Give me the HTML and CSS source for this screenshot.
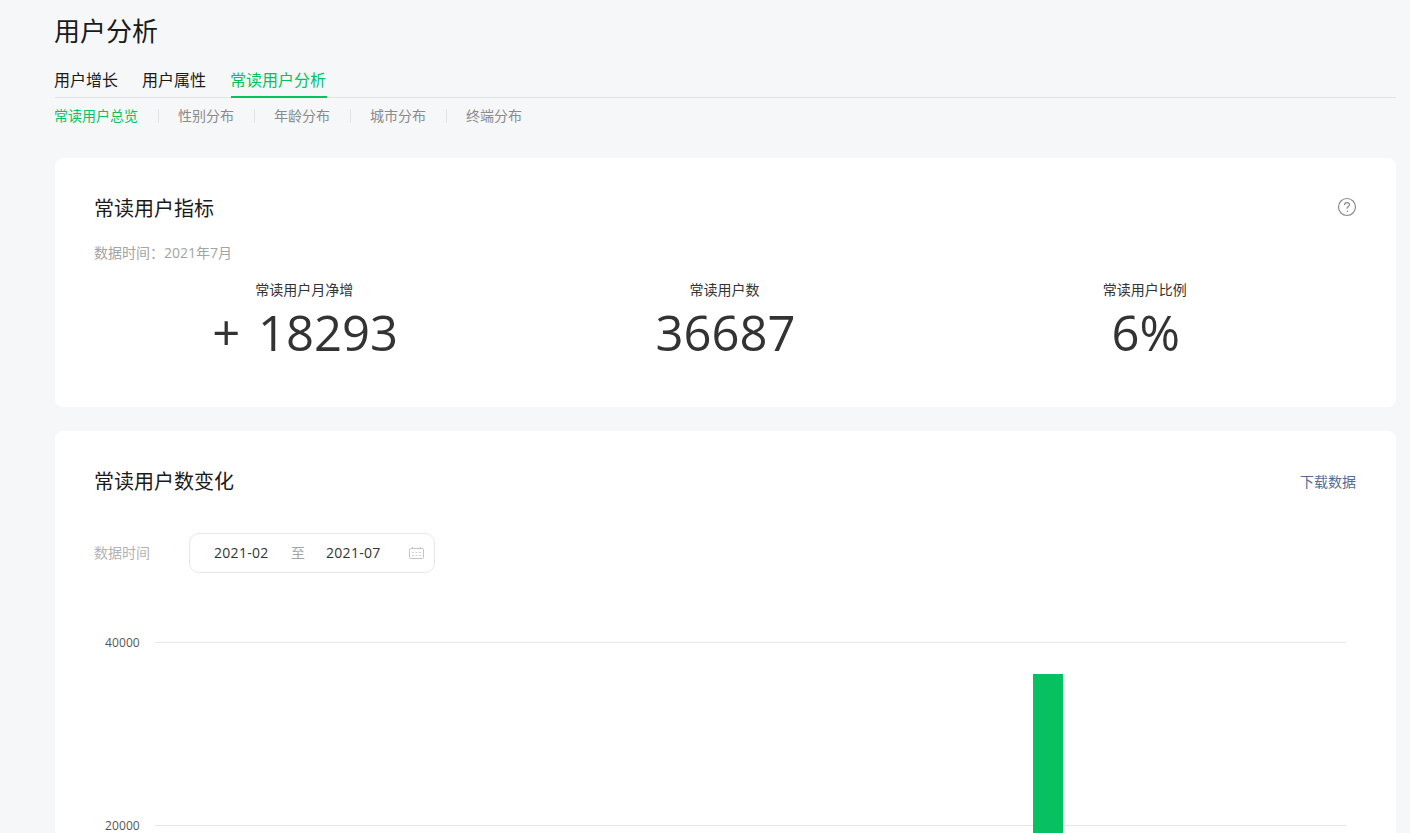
FILE: index.html
```html
<!DOCTYPE html>
<html lang="zh-CN">
<head>
<meta charset="utf-8">
<title>用户分析</title>
<link rel="stylesheet" href="styles.css">
</head>
<body>
<main class="page">
  <h1 class="page-title">用户分析</h1>
  <nav class="tabs">
    <a class="tab">用户增长</a>
    <a class="tab">用户属性</a>
    <a class="tab tab-active">常读用户分析</a>
  </nav>
  <nav class="subnav">
    <a class="sub sub-active">常读用户总览</a>
    <a class="sub">性别分布</a>
    <a class="sub">年龄分布</a>
    <a class="sub">城市分布</a>
    <a class="sub">终端分布</a>
  </nav>

  <section class="card card-metrics">
    <header class="card-head">
      <h2 class="card-title">常读用户指标</h2>
      <svg class="help" width="20" height="20" viewBox="0 0 20 20" fill="none">
        <circle cx="10" cy="10" r="8.5" stroke="#8a8a8a" stroke-width="1.2"/>
        <path d="M7.5 8c0-1.500 1.100-2.400 2.500-2.400s2.500.9 2.500 2.200c0 1-.6 1.500-1.300 2-.7.5-1.200.9-1.200 1.900" stroke="#8a8a8a" stroke-width="1.2"/>
        <circle cx="10.500" cy="14.200" r=".8" fill="#8a8a8a"/>
      </svg>
    </header>
    <p class="data-time">数据时间：2021年7月</p>
    <div class="metrics">
      <div class="metric">
        <div class="metric-label">常读用户月净增</div>
        <div class="metric-value">+ 18293</div>
      </div>
      <div class="metric">
        <div class="metric-label">常读用户数</div>
        <div class="metric-value">36687</div>
      </div>
      <div class="metric">
        <div class="metric-label">常读用户比例</div>
        <div class="metric-value">6%</div>
      </div>
    </div>
  </section>

  <section class="card card-chart">
    <header class="card-head">
      <h2 class="card-title">常读用户数变化</h2>
      <a class="download">下载数据</a>
    </header>
    <div class="filter">
      <span class="filter-label">数据时间</span>
      <div class="range">
        <span class="range-date">2021-02</span>
        <span class="range-sep">至</span>
        <span class="range-date">2021-07</span>
        <svg class="calendar" width="15" height="12" viewBox="0 0 15 12" fill="none">
          <rect x=".5" y="1.500" width="14" height="10" rx="1" stroke="#c4c4c4"/>
          <path d="M3.500 0v2M11.500 0v2" stroke="#c4c4c4"/>
          <path d="M3 5h2v1H3zM6.500 5h2v1h-2zM10 5h2v1h-2zM3 8h2v1H3zM6.500 8h2v1h-2zM10 8h2v1h-2z" fill="#cfcfcf"/>
        </svg>
      </div>
    </div>
    <div class="chart">
      <div class="gridline"><span class="tick">40000</span></div>
      <div class="gridline"><span class="tick">20000</span></div>
      <div class="bars">
        <div class="bar-slot"></div>
        <div class="bar-slot"></div>
        <div class="bar-slot"></div>
        <div class="bar-slot"></div>
        <div class="bar-slot"><div class="bar" style="height:334px"></div></div>
        <div class="bar-slot"></div>
      </div>
    </div>
  </section>
</main>
</body>
</html>
```
FILE: styles.css
```css
* { box-sizing: border-box; }
html, body { margin: 0; height: 833px; overflow: hidden; }
body {
  background: #f6f7f9;
  color: #1a1a1a;
  font-family: "Open Sans", "Noto Sans CJK SC", sans-serif;
}
.page { padding: 0 14px 0 55px; }

.page-title {
  margin: 0;
  padding-top: 13px;
  height: 68px;
  font-size: 26px;
  line-height: 36px;
  font-weight: 400;
  text-indent: -1px;
}

.tabs {
  display: flex;
  gap: 24px;
  height: 30px;
  border-bottom: 1px solid #e2e3e5;
}
.tab {
  height: 30px;
  padding-right: 1px;
  font-size: 16px;
  line-height: 24px;
  color: #1a1a1a;
  text-indent: -1px;
}
.tab-active {
  color: #07c160;
  border-bottom: 2px solid #07c160;
}

.subnav {
  display: flex;
  align-items: center;
  height: 36px;
  margin-bottom: 24px;
}
.sub {
  font-size: 14px;
  line-height: 20px;
  color: #8a8a8a;
  padding-right: 21px;
  margin-right: 20px;
  position: relative;
  text-indent: -1px;
}
.sub:not(:last-child)::after {
  content: "";
  position: absolute;
  right: 0;
  top: 3px;
  width: 1px;
  height: 14px;
  background: #e2e3e5;
}
.sub-active { color: #07c160; }

.card {
  background: #fff;
  border-radius: 8px;
  padding: 0 40px;
}
.card-metrics { height: 249px; margin-bottom: 24px; }
.card-chart { height: 600px; }

.card-head {
  display: flex;
  justify-content: space-between;
  align-items: center;
  height: 102px;
}
.card-title {
  margin: 0;
  font-size: 20px;
  line-height: 28px;
  font-weight: 400;
  text-indent: -1px;
}
.help { margin-right: -1px; margin-top: -4px; }

.data-time {
  margin: -17px 0 0;
  height: 37px;
  font-size: 14px;
  line-height: 20px;
  color: #a3a3a3;
  text-indent: -1px;
}

.metrics {
  display: grid;
  grid-template-columns: repeat(3, 1fr);
  text-align: center;
}
.metric-label {
  font-size: 14px;
  line-height: 20px;
  color: #333;
  text-indent: -2px;
}
.metric-value {
  font-size: 49px;
  line-height: 64px;
  color: #333;
  word-spacing: 5px;
}

.download {
  font-size: 14px;
  color: #576b95;
  margin-top: -2px;
}

.filter {
  display: flex;
  align-items: center;
  gap: 38px;
  margin-bottom: 69px;
}
.filter-label {
  font-size: 14px;
  color: #b3b3b3;
  width: 56px;
  margin-top: -2px;
  text-indent: -1px;
}
.range {
  display: flex;
  align-items: center;
  width: 246px;
  height: 40px;
  padding: 0 10px 0 24px;
  border: 1px solid #e7e7e7;
  border-radius: 10px;
  font-size: 14px;
  color: #333;
}
.range-date { width: 56px; letter-spacing: .3px; margin-top: -2px; }
.range-sep {
  width: 56px;
  text-align: center;
  color: #a3a3a3;
  margin-top: -2px;
}
.calendar { margin-left: auto; }

.chart {
  position: relative;
  margin: 0 10px 0 60px;
  height: 366px;
}
.gridline {
  position: relative;
  height: 183px;
  border-top: 1px solid #e6e6e6;
}
.tick {
  position: absolute;
  left: -50px;
  top: -9px;
  font-size: 12px;
  line-height: 18px;
  color: #555;
  letter-spacing: .1px;
}
.bars {
  position: absolute;
  inset: 0;
  display: grid;
  grid-template-columns: repeat(6, 1fr);
}
.bar-slot {
  display: flex;
  justify-content: center;
  align-items: flex-end;
}
.bar {
  width: 30px;
  background: #07c160;
}
```
